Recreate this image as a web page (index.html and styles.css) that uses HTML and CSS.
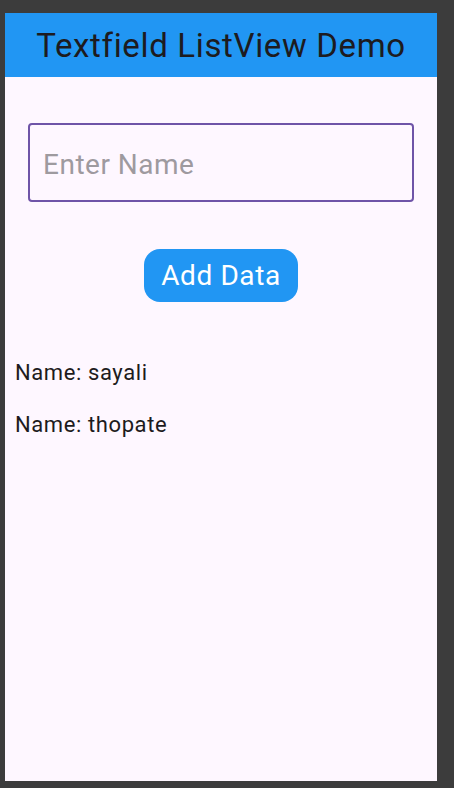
FILE: index.html
```html
<!DOCTYPE html>
<html>
<head>
<meta charset="utf-8">
<link rel="stylesheet" href="styles.css">
</head>
<body>
<div class="phone">
  <header class="appbar"><h1 class="title">Textfield ListView Demo</h1></header>
  <main class="content">
    <div class="field-wrap">
      <div class="field"><span class="placeholder">Enter Name</span></div>
    </div>
    <div class="btn-row"><button class="btn">Add Data</button></div>
    <ul class="list">
      <li class="item">Name: sayali</li>
      <li class="item">Name: thopate</li>
    </ul>
  </main>
</div>
</body>
</html>
```
FILE: styles.css
```css
html, body { margin: 0; padding: 0; }
body {
  background: #3c3c3c;
  width: 454px;
  height: 788px;
  overflow: hidden;
  font-family: Roboto, "Noto Sans", sans-serif;
  padding-top: 13px;
  padding-left: 5px;
  box-sizing: border-box;
}
.phone {
  width: 432px;
  height: 768px;
  background: #fef7ff;
  display: flex;
  flex-direction: column;
}
.appbar {
  height: 64px;
  background: #2196f3;
  display: flex;
  align-items: center;
  justify-content: center;
  flex-shrink: 0;
}
.title {
  margin: 0;
  font-weight: 400;
  font-size: 33px;
  letter-spacing: 0.65px;
  color: #1d1b20;
}
.content { display: flex; flex-direction: column; }
.field-wrap { padding: 46px 23px 0 23px; }
.field {
  height: 79px;
  border: 2px solid #6f54a8;
  border-radius: 4px;
  box-sizing: border-box;
  display: flex;
  align-items: center;
  padding-left: 13px;
  padding-top: 4px;
}
.placeholder { font-size: 28px; letter-spacing: 0.5px; color: #9e9a9f; }
.btn-row { display: flex; justify-content: center; padding-top: 47px; }
.btn {
  width: 154px;
  height: 53px;
  background: #2196f3;
  border: none;
  border-radius: 16px;
  color: #fff;
  font-family: Roboto, sans-serif;
  font-size: 28px;
  letter-spacing: 0.6px;
  padding: 0;
}
.list { list-style: none; margin: 0; padding: 58px 0 0 10px; }
.item { font-size: 22px; letter-spacing: 0.6px; color: #1d1b20; line-height: 26px; margin-bottom: 26px; }
```
